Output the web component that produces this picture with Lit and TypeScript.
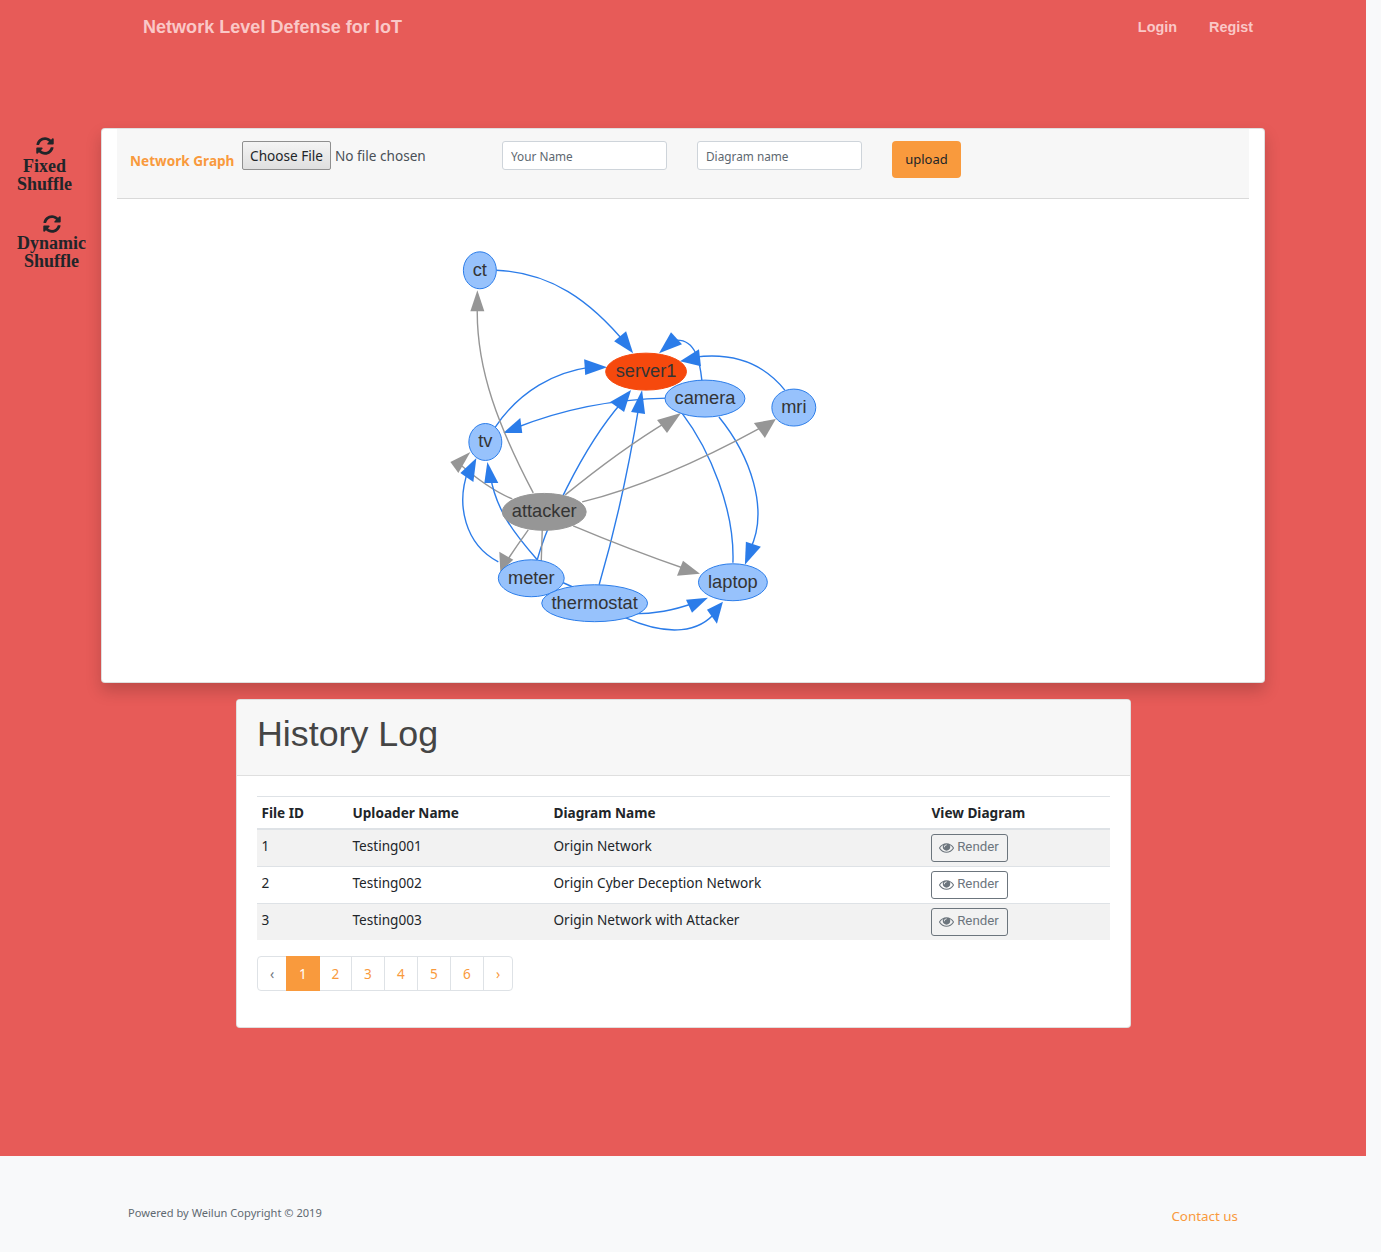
import { LitElement, html, css, svg } from "lit";
import { customElement } from "lit/decorators.js";

const BLUE = "#2b7ce9";
const GRAY = "#969696";

type Edge = { d: string; c: string; a?: string };
const edges: Edge[] = [
  { d: "M496,270 C550,272 590,300 627,345", c: BLUE, a: "633,353 614,341 626,331" },
  { d: "M702,381 C700,362 696,340 677,340", c: BLUE, a: "659,353 671,332 682,344" },
  { d: "M785,390 C765,365 735,352 695,357", c: BLUE, a: "680,361 699,349 701,366" },
  { d: "M495,427 C520,390 555,372 590,367", c: BLUE, a: "607,367 584,359 585,375" },
  { d: "M667,398 C610,399 560,410 515,428", c: BLUE, a: "503,433 520,418 522,433" },
  { d: "M533,493 C500,430 475,370 477,305", c: GRAY, a: "477,290 470,311 484,311" },
  { d: "M537,560 C545,530 580,450 622,402", c: BLUE, a: "631,390 610,402 624,412" },
  { d: "M599,585 C615,530 630,460 639,405", c: BLUE, a: "642,390 631,412 645,414" },
  { d: "M682,413 C710,450 735,510 733,563", c: BLUE },
  { d: "M719,417 C750,455 770,510 750,550", c: BLUE, a: "745,565 746,542 761,547" },
  { d: "M582,502 C650,485 720,450 762,427", c: GRAY, a: "776,419 754,423 765,438" },
  { d: "M565,495 Q620,450 668,421", c: GRAY, a: "681,413 657,420 667,433" },
  { d: "M512,499 C495,492 480,482 458,463", c: GRAY, a: "470,452 450,462 458,473" },
  { d: "M498,562 C465,545 455,505 468,470", c: BLUE, a: "476,458 460,473 473,482" },
  { d: "M537,560 C515,535 495,510 490,475", c: BLUE, a: "487,462 484,483 498,483" },
  { d: "M528,530 Q515,548 504,565", c: GRAY, a: "500,572 499,552 513,560" },
  { d: "M542,530 L541,562", c: GRAY },
  { d: "M573,526 Q630,550 688,570", c: GRAY, a: "700,574 683,561 677,576" },
  { d: "M563,583 L572,587", c: BLUE },
  { d: "M625,614 C655,615 675,610 695,603", c: BLUE, a: "708,598 686,600 692,613" },
  { d: "M625,618 C670,638 700,632 716,612", c: BLUE, a: "723,602 707,610 717,624" },
];

type GNode = { x: number; y: number; rx: number; t: string; f: string; s: string };
const nodes: GNode[] = [
  { x: 479.5, y: 270, rx: 16.5, t: "ct", f: "#97c2fc", s: BLUE },
  { x: 646, y: 371.5, rx: 40.5, t: "server1", f: "#f6490d", s: "#f6490d" },
  { x: 705, y: 398.5, rx: 40, t: "camera", f: "#97c2fc", s: BLUE },
  { x: 794, y: 407.5, rx: 22, t: "mri", f: "#97c2fc", s: BLUE },
  { x: 485, y: 442, rx: 16.5, t: "tv", f: "#97c2fc", s: BLUE },
  { x: 544, y: 512, rx: 42, t: "attacker", f: "#969696", s: "#969696" },
  { x: 531, y: 578.5, rx: 33, t: "meter", f: "#97c2fc", s: BLUE },
  { x: 594.5, y: 603.5, rx: 53, t: "thermostat", f: "#97c2fc", s: BLUE },
  { x: 733, y: 582.5, rx: 34.5, t: "laptop", f: "#97c2fc", s: BLUE },
];

const refresh = html`<svg class="refresh" viewBox="0 0 512 512" aria-hidden="true"><path d="M370.72 133.28C339.46 104 298.9 88 255.8 88c-77.5.07-144.4 53.2-162.9 126.9-1.3 5.4-6.1 9.1-11.6 9.1H24c-7.5 0-13.2-6.8-11.8-14.2C33.9 94.9 134.8 8 256 8c66.4 0 126.8 26.1 171.3 68.7L463 41c15.1-15.1 41-4.4 41 17v134c0 13.3-10.7 24-24 24H346c-21.4 0-32.1-25.9-17-41l41.7-41.7zM32 296h134c21.4 0 32.1 25.9 17 41l-41.7 41.7c31.3 29.3 71.8 45.3 115 45.3 77.4-.07 144.3-53.1 162.8-126.8 1.3-5.4 6.1-9.1 11.6-9.1h57.3c7.5 0 13.2 6.8 11.8 14.2C478.1 417.1 377.2 504 256 504c-66.4 0-126.8-26.1-171.3-68.7L49 471c-15.1 15.1-41 4.4-41-17V320c0-13.3 10.7-24 24-24z"/></svg>`;

const eye = html`<svg class="eye" viewBox="0 0 1792 1792" aria-hidden="true"><path d="M1664 960q-152-236-381-353 61 104 61 225 0 185-131.500 316.500t-316.500 131.500-316.500-131.500-131.500-316.500q0-121 61-225-229 117-381 353 133 205 333.500 326.500t434.500 121.500 434.500-121.500 333.500-326.500zm-720-384q0-20-14-34t-34-14q-125 0-214.500 89.500t-89.500 214.500q0 20 14 34t34 14 34-14 14-34q0-86 61-147t147-61q20 0 34-14t14-34zm848 384q0 34-20 69-140 230-376.500 368.500t-499.500 138.500-499.500-139-376.500-368q-20-35-20-69t20-69q140-229 376.500-368t499.500-139 499.500 139 376.500 368q20 35 20 69z"/></svg>`;

const rows = [
  ["1", "Testing001", "Origin Network"],
  ["2", "Testing002", "Origin Cyber Deception Network"],
  ["3", "Testing003", "Origin Network with Attacker"],
];

@customElement("app-graph")
class AppGraph extends LitElement {
  static styles = css`
    :host { display: block; }
    svg { display: block; width: 100%; height: 484px; }
    text { font: 18.3px "Liberation Sans", Arial, sans-serif; fill: #343434; text-anchor: middle; dominant-baseline: central; }
  `;
  render() {
    return html`<svg viewBox="101 199 1164 484">
      ${edges.map(
        (e) => svg`<path d=${e.d} fill="none" stroke=${e.c} stroke-width="1.4"></path>
        ${e.a ? svg`<polygon points=${e.a} fill=${e.c}></polygon>` : ""}`
      )}
      ${nodes.map(
        (n) => svg`<ellipse cx=${n.x} cy=${n.y} rx=${n.rx} ry="18.5" fill=${n.f} stroke=${n.s}></ellipse>
        <text x=${n.x} y=${n.y - 1}>${n.t}</text>`
      )}
    </svg>`;
  }
}

@customElement("app-root")
export class AppRoot extends LitElement {
  static styles = css`
    :host {
      display: block;
      background: #f8f9fa;
      font-family: "Noto Sans", "Open Sans", sans-serif;
      font-size: 13.6px;
      color: #212529;
    }
    .wrap { width: 1366px; }
    .nav {
      display: flex;
      align-items: center;
      justify-content: space-between;
      height: 55px;
      padding: 0 113px 0 143px;
      background: #e75b58;
      font-family: "Liberation Sans", Arial, sans-serif;
      font-weight: 700;
      color: #fac8c7;
    }
    .brand { font-size: 18px; letter-spacing: 0.03px; }
    .links { display: flex; gap: 32px; font-size: 14.4px; padding-bottom: 2px; }
    .main {
      background: #e75b58;
      height: 1101px;
      padding-top: 73px;
      box-sizing: border-box;
      position: relative;
    }
    .side {
      position: absolute;
      left: 0;
      top: 82px;
      font: 700 18px/18px "Liberation Serif", "Times New Roman", serif;
      color: #212529;
      text-align: center;
    }
    .side-item { width: 89px; margin-bottom: 22px; }
    .side-item.b { margin-left: 7px; }
    .side-item.b .refresh { margin-bottom: 1px; }
    .refresh { display: block; width: 18px; height: 18px; margin: 0 auto 2px; fill: #212529; }
    .card {
      background: #fff;
      border: 1px solid rgba(0, 0, 0, 0.125);
      border-radius: 4px;
      box-sizing: border-box;
    }
    .graph-card {
      width: 1164px;
      margin-left: 101px;
      height: 555px;
      box-shadow: 0 8px 16px rgba(0, 0, 0, 0.18);
    }
    .bar {
      margin: 0 15px;
      height: 70px;
      box-sizing: border-box;
      background: #f7f7f7;
      border-bottom: 1px solid #d9d9d9;
      display: flex;
      align-items: flex-start;
      padding: 12px 0 0 13px;
    }
    .bar-title { font-weight: 700; color: #f99a3d; margin-top: 10px; width: 112px; white-space: nowrap; }
    .file-btn {
      box-sizing: border-box;
      height: 29px;
      width: 89px;
      background: linear-gradient(#f4f4f4, #dfdfdf);
      border: 1px solid #8f8f8f;
      border-radius: 2px;
      color: #212529;
      font: inherit;
      padding: 0;
      line-height: 25px;
    }
    .no-file { margin: 5px 0 0 4px; width: 167px; white-space: nowrap; color: #495057; }
    .bar input {
      box-sizing: border-box;
      width: 165px;
      height: 29px;
      margin-right: 30px;
      padding: 1px 8px 0;
      border: 1px solid #ced4da;
      border-radius: 3px;
      font: 11.8px "Noto Sans", "Open Sans", sans-serif;
      color: #495057;
      background: #fff;
    }
    .bar input::placeholder { color: #5d6770; opacity: 1; }
    .upload {
      box-sizing: border-box;
      height: 37px;
      width: 69px;
      padding: 0 0 2px;
      background: #f99a3d;
      border: 0;
      border-radius: 4px;
      color: #212529;
      font: 13px "Noto Sans", "Open Sans", sans-serif;
    }
    .history { width: 895px; margin: 16px 0 0 236px; height: 329px; }
    .history-head {
      height: 76px;
      box-sizing: border-box;
      background: #f7f7f7;
      border-bottom: 1px solid #dfdfdf;
      border-radius: 3px 3px 0 0;
      padding: 0 20px;
      font-size: 35.8px;
      line-height: 68px;
      color: #454545;
      font-family: "Liberation Sans", Arial, sans-serif;
    }
    .history-body { padding: 20px; }
    table { width: 100%; border-collapse: collapse; table-layout: fixed; }
    th {
      text-align: left;
      font-weight: 700;
      padding: 7px 4px 6px 4.500px;
      height: 18px;
      line-height: 18px;
      border-top: 1px solid #dee2e6;
      border-bottom: 2px solid #dee2e6;
    }
    td {
      box-sizing: border-box;
      height: 37px;
      padding: 0 4px 3px 4.500px;
      border-top: 1px solid #dee2e6;
      vertical-align: middle;
      line-height: 18px;
    }
    tr.odd td { background: #f2f2f2; }
    .render {
      display: inline-flex;
      align-items: center;
      justify-content: center;
      gap: 3px;
      box-sizing: border-box;
      width: 77px;
      height: 28px;
      margin: 3px 0 0 -1px;
      background: transparent;
      border: 1px solid #6c757d;
      border-radius: 3px;
      color: #6c757d;
      font: 13.3px "Roboto", sans-serif;
      padding: 0 0 2px;
    }
    .eye { width: 15px; height: 15px; fill: #6c757d; margin-top: 2px; }
    .pager {
      display: inline-flex;
      margin-top: 16px;
      height: 35px;
      border: 1px solid #dee2e6;
      border-radius: 4px;
      box-sizing: border-box;
      color: #f99a3d;
    }
    .pager span {
      display: flex;
      align-items: center;
      justify-content: center;
      width: 33px;
      border-right: 1px solid #dee2e6;
      box-sizing: border-box;
    }
    .pager .two { width: 32px; }
    .pager .next { border-right: 0; width: 28px; }
    .pager .prev { width: 28px; border-right: 0; color: #6c757d; }
    .pager .cur { background: #f99a3d; color: #fff; width: 34px; margin: -1px 0; border: 0; }
    .footer {
      height: 96px;
      background: #f8f9fa;
      display: flex;
      justify-content: space-between;
      padding: 0 128px;
      box-sizing: border-box;
    }
    .powered { font-size: 11.1px; margin-top: 49px; color: #5f6971; }
    .contact { color: #f99a3d; font-size: 13.4px; margin-top: 51px; }
  `;

  render() {
    return html`
      <div class="wrap">
        <div class="nav">
          <span class="brand">Network Level Defense for IoT</span>
          <span class="links"><span>Login</span><span>Regist</span></span>
        </div>
        <div class="main">
          <div class="side">
            <div class="side-item">${refresh}Fixed<br />Shuffle</div>
            <div class="side-item b">${refresh}Dynamic<br />Shuffle</div>
          </div>
          <div class="card graph-card">
            <div class="bar">
              <span class="bar-title">Network Graph</span>
              <button class="file-btn">Choose File</button>
              <span class="no-file">No file chosen</span>
              <input placeholder="Your Name" />
              <input placeholder="Diagram name" />
              <button class="upload">upload</button>
            </div>
            <app-graph></app-graph>
          </div>
          <div class="card history">
            <div class="history-head">History Log</div>
            <div class="history-body">
              <table>
                <colgroup><col style="width:91px" /><col style="width:201px" /><col style="width:378px" /><col /></colgroup>
                <thead><tr><th>File ID</th><th>Uploader Name</th><th>Diagram Name</th><th>View Diagram</th></tr></thead>
                <tbody>
                  ${rows.map(
                    (r, i) => html`<tr class=${i % 2 === 0 ? "odd" : ""}>
                      <td>${r[0]}</td><td>${r[1]}</td><td>${r[2]}</td>
                      <td><button class="render">${eye}Render</button></td>
                    </tr>`
                  )}
                </tbody>
              </table>
              <div class="pager">
                <span class="prev">‹</span><span class="cur">1</span><span class="two">2</span><span>3</span><span>4</span><span>5</span><span>6</span><span class="next">›</span>
              </div>
            </div>
          </div>
        </div>
        <div class="footer">
          <span class="powered">Powered by Weilun Copyright © 2019</span>
          <span class="contact">Contact us</span>
        </div>
      </div>
    `;
  }
}
